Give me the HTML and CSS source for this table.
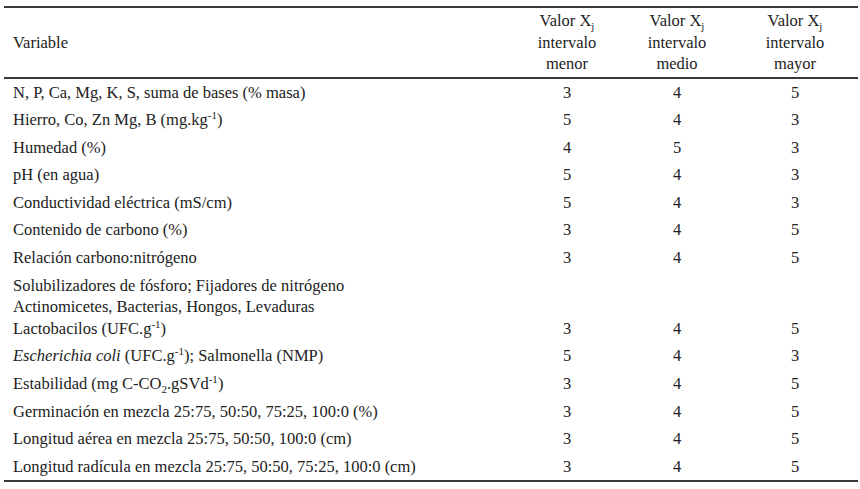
FILE: index.html
```html
<!DOCTYPE html>
<html lang="es">
<head>
<meta charset="utf-8">
<link rel="stylesheet" href="styles.css">
</head>
<body>
<table class="tbl">
  <colgroup>
    <col class="c-var">
    <col class="c-v">
    <col class="c-v">
    <col class="c-v3">
  </colgroup>
  <thead>
    <tr>
      <th class="h-var">Variable</th>
      <th class="h-val">Valor X<sub>j</sub><br>intervalo<br>menor</th>
      <th class="h-val">Valor X<sub>j</sub><br>intervalo<br>medio</th>
      <th class="h-val">Valor X<sub>j</sub><br>intervalo<br>mayor</th>
    </tr>
  </thead>
  <tbody>
    <tr><td>N, P, Ca, Mg, K, S, suma de bases (% masa)</td><td>3</td><td>4</td><td>5</td></tr>
    <tr><td>Hierro, Co, Zn Mg, B (mg.kg<sup>-1</sup>)</td><td>5</td><td>4</td><td>3</td></tr>
    <tr><td>Humedad (%)</td><td>4</td><td>5</td><td>3</td></tr>
    <tr><td>pH (en agua)</td><td>5</td><td>4</td><td>3</td></tr>
    <tr><td>Conductividad eléctrica (mS/cm)</td><td>5</td><td>4</td><td>3</td></tr>
    <tr><td>Contenido de carbono (%)</td><td>3</td><td>4</td><td>5</td></tr>
    <tr><td>Relación carbono:nitrógeno</td><td>3</td><td>4</td><td>5</td></tr>
    <tr><td>Solubilizadores de fósforo; Fijadores de nitrógeno<br>Actinomicetes, Bacterias, Hongos, Levaduras<br>Lactobacilos (UFC.g<sup>-1</sup>)</td><td>3</td><td>4</td><td>5</td></tr>
    <tr><td><i>Escherichia coli</i> (UFC.g<sup>-1</sup>); Salmonella (NMP)</td><td>5</td><td>4</td><td>3</td></tr>
    <tr><td>Estabilidad (mg C-CO<sub>2</sub>.gSVd<sup>-1</sup>)</td><td>3</td><td>4</td><td>5</td></tr>
    <tr><td>Germinación en mezcla 25:75, 50:50, 75:25, 100:0 (%)</td><td>3</td><td>4</td><td>5</td></tr>
    <tr><td>Longitud aérea en mezcla 25:75, 50:50, 100:0 (cm)</td><td>3</td><td>4</td><td>5</td></tr>
    <tr><td>Longitud radícula en mezcla 25:75, 50:50, 75:25, 100:0 (cm)</td><td>3</td><td>4</td><td>5</td></tr>
  </tbody>
</table>
</body>
</html>
```

FILE: styles.css
```css
html, body {
  margin: 0;
  padding: 0;
  background: #ffffff;
}

body {
  font-family: "Liberation Serif", "Times New Roman", serif;
  font-size: 16.5px;
  color: #222222;
}

.tbl {
  margin: 6px 0 0 4px;
  width: 854px;
  border-collapse: collapse;
  table-layout: fixed;
  border-top: 2px solid #3a3a3a;
  border-bottom: 2px solid #3a3a3a;
}

.c-var { width: 508px; }
.c-v { width: 110px; }
.c-v3 { width: 126px; }

.tbl thead tr {
  border-bottom: 2px solid #3a3a3a;
}

.tbl th {
  font-weight: normal;
  line-height: 21.5px;
  padding: 2px 0;
}

.tbl th.h-var {
  text-align: left;
  vertical-align: middle;
  padding-left: 9px;
}

.h-val {
  text-align: center;
  vertical-align: bottom;
}

.tbl td {
  line-height: 21.6px;
  padding: 3px 0;
  text-align: center;
  vertical-align: bottom;
}

.tbl td:first-child {
  text-align: left;
  padding-left: 9px;
}

sub, sup {
  font-size: 11px;
  line-height: 0;
}

sup { vertical-align: 6px; }
sub { vertical-align: -4px; }
```
